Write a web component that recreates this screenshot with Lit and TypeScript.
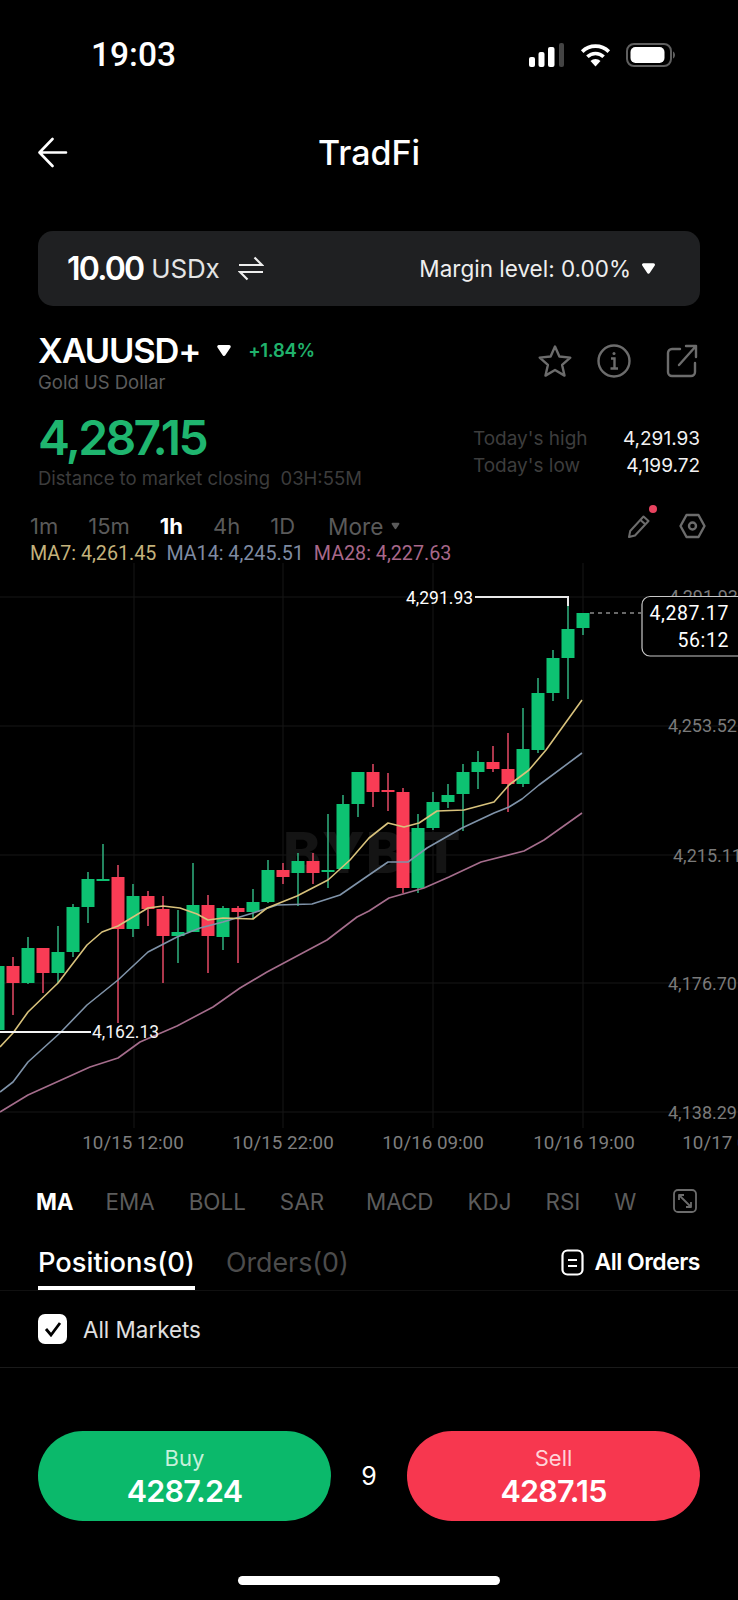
import {LitElement, css, html, svg} from 'lit';
import {customElement} from 'lit/decorators.js';

// chart coordinates are page pixels, the svg viewBox starts at y=563
type Candle = [number, number, number, number, number, 'g' | 'r'];

const CANDLES: Candle[] = [
  [-2, 966, 1030, 960, 1030, 'g'],
  [13, 966, 983, 957, 1015, 'r'],
  [28, 948, 983, 937, 984, 'g'],
  [43, 948, 973, 948, 993, 'r'],
  [58, 952, 973, 926, 983, 'g'],
  [73, 907, 952, 904, 957, 'g'],
  [88, 879, 907, 872, 923, 'g'],
  [103, 879, 881, 844, 881, 'g'],
  [118, 877, 929, 865, 1023, 'r'],
  [133, 896, 929, 884, 937, 'g'],
  [148, 896, 909, 891, 926, 'r'],
  [163, 909, 936, 896, 983, 'r'],
  [178, 932, 936, 910, 963, 'g'],
  [193, 905, 932, 863, 932, 'g'],
  [208, 905, 936, 895, 973, 'r'],
  [223, 908, 937, 906, 950, 'g'],
  [238, 908, 912, 906, 963, 'r'],
  [253, 902, 912, 889, 919, 'g'],
  [268, 870, 902, 860, 903, 'g'],
  [283, 870, 877, 863, 884, 'r'],
  [298, 861, 873, 853, 906, 'g'],
  [313, 861, 873, 853, 884, 'r'],
  [328, 870, 872, 814, 888, 'g'],
  [343, 804, 869, 795, 869, 'g'],
  [358, 772, 804, 772, 817, 'g'],
  [373, 772, 792, 764, 807, 'r'],
  [388, 790, 792, 773, 811, 'r'],
  [403, 792, 888, 788, 893, 'r'],
  [418, 828, 888, 814, 893, 'g'],
  [433, 802, 828, 792, 830, 'g'],
  [448, 795, 802, 784, 808, 'g'],
  [463, 772, 794, 764, 831, 'g'],
  [478, 762, 772, 751, 789, 'g'],
  [493, 762, 769, 746, 772, 'r'],
  [508, 769, 784, 733, 812, 'r'],
  [523, 749, 784, 708, 787, 'g'],
  [538, 693, 750, 678, 753, 'g'],
  [553, 658, 693, 650, 701, 'g'],
  [568, 629, 658, 597, 699, 'g'],
  [583, 613, 628, 613, 635, 'g'],
];

const MA7 = '0,1047 13,1033 28,1012 58,983 87,945 102,932 118,926 133,917 148,908 163,906 180,908 197,914 208,920 223,918 253,919 267,908 297,896 328,880 350,860 369,838 388,823 404,827 419,823 437,811 464,810 494,802 509,785 529,770 546,750 582,700';
const MA14 = '0,1092 13,1082 28,1062 60,1033 87,1005 118,980 148,952 177,937 200,928 223,922 253,913 277,905 312,904 340,895 369,875 388,862 408,862 427,848 462,828 494,813 509,807 522,799 539,785 582,753';
const MA28 = '0,1112 28,1095 90,1067 118,1058 140,1042 177,1026 213,1007 240,988 267,972 327,940 357,917 369,911 389,898 424,888 449,877 481,862 524,851 544,840 582,813';

const H_GRID = [597, 726, 855, 983, 1112];
const V_GRID = [134, 283, 433, 583];

const AXIS: [string, number, number][] = [
  ['4,291.93', 738, 597],
  ['4,253.52', 737, 726],
  ['4,215.11', 742, 856],
  ['4,176.70', 737, 984],
  ['4,138.29', 737, 1113],
];

const TIMES: [string, number][] = [
  ['10/15 12:00', 133],
  ['10/15 22:00', 283],
  ['10/16 09:00', 433],
  ['10/16 19:00', 584],
  ['10/17 05:00', 733],
];

const caret = (w: number, h: number, fill: string) => html`
  <svg width=${w} height=${h} viewBox="0 0 12 10">
    <path d="M2 2h8L6 8z" fill=${fill} stroke=${fill} stroke-width="2.4" stroke-linejoin="round"/>
  </svg>`;

@customElement('app-root')
export class AppRoot extends LitElement {
  static styles = css`
    :host {
      display: block;
      width: 738px;
      height: 1600px;
      overflow: hidden;
      background: #000;
      color: #fff;
      font-family: Inter, "Liberation Sans", sans-serif;
    }

    svg {
      display: block;
      flex: none;
    }

    .status {
      height: 110px;
      padding: 41px 63px 0 91px;
      box-sizing: border-box;
      display: flex;
      justify-content: space-between;
      align-items: flex-start;
    }

    .clock {
      font-family: Roboto, sans-serif;
      font-size: 33.5px;
      line-height: 28px;
      font-weight: 500;
    }

    .status-icons {
      display: flex;
      gap: 15px;
      padding-top: 2px;
    }

    .nav {
      height: 84px;
      padding: 27px 38px 0;
      position: relative;
      box-sizing: border-box;
    }

    .nav-title {
      position: absolute;
      left: 0;
      right: 0;
      top: 25px;
      text-align: center;
      font-size: 34px;
      line-height: 36px;
      font-weight: 500;
    }

    .nav-wrap {
      height: 121px;
    }

    .balance {
      margin: 0 38px;
      height: 75px;
      border-radius: 15px;
      background: #1f2022;
      display: flex;
      align-items: center;
      padding: 0 44px 0 29px;
    }

    .balance b {
      font-size: 32px;
      font-weight: 600;
      letter-spacing: -1.8px;
    }

    .balance .unit {
      font-size: 26px;
      margin-left: 8px;
      color: #e4e4e4;
      letter-spacing: -0.2px;
    }

    .balance .swap {
      margin-left: 19px;
    }

    .margin {
      margin-left: auto;
      display: flex;
      align-items: center;
      gap: 10px;
      font-size: 22.5px;
      color: #eee;
    }

    .symbol {
      height: 88px;
      padding: 24px 40px 0 38px;
      display: flex;
      justify-content: space-between;
      box-sizing: border-box;
    }

    .symbol-name {
      display: flex;
      align-items: center;
      height: 40px;
    }

    .symbol-name strong {
      font-size: 34.5px;
      font-weight: 600;
      letter-spacing: -1.2px;
    }

    .symbol-name .chg {
      margin-left: 16px;
      font-size: 18.5px;
      font-weight: 600;
      color: #20b26c;
      letter-spacing: -0.3px;
    }

    .symbol-name svg {
      margin-left: 16px;
    }

    .symbol-sub {
      margin-top: 1px;
      font-size: 18.5px;
      line-height: 22px;
      color: #5c5c5c;
    }

    .symbol-tools {
      display: flex;
      gap: 25px;
      padding-top: 14px;
      height: 36px;
    }

    .symbol-tools .share {
      margin-left: 10px;
    }

    .quote {
      height: 115px;
      padding: 18px 38px 0;
      display: flex;
      justify-content: space-between;
      box-sizing: border-box;
    }

    .price {
      font-size: 48px;
      line-height: 52px;
      font-weight: 600;
      color: #1fb56f;
      letter-spacing: -2.7px;
    }

    .distance {
      margin-top: 3px;
      font-size: 18.5px;
      line-height: 22px;
      color: #3c3c3c;
    }

    .range {
      display: grid;
      grid-template-columns: 150px auto;
      row-gap: 4px;
      padding-top: 15px;
      font-size: 19px;
      line-height: 23px;
      align-content: start;
    }

    .range span {
      color: #3d3d3d;
    }

    .range b {
      font-weight: 400;
      text-align: right;
      color: #f2f2f2;
    }

    .periods {
      height: 34px;
      padding: 0 32px 0 30px;
      display: flex;
      align-items: center;
      font-size: 22px;
      color: #5a5a5a;
    }

    .periods span {
      margin-right: 30px;
    }

    .periods .on {
      color: #fff;
      font-weight: 700;
    }

    .periods .more {
      display: flex;
      align-items: center;
      gap: 8px;
      margin: 0 0 0 3px;
      font-size: 22.6px;
    }

    .period-tools {
      margin-left: auto;
      display: flex;
      gap: 28px;
      align-items: center;
      position: relative;
    }

    .period-dot {
      position: absolute;
      left: 22px;
      top: -8px;
      width: 8px;
      height: 8px;
      border-radius: 50%;
      background: #e8435f;
    }

    .ma-row {
      height: 20px;
      padding-left: 30px;
      display: flex;
      gap: 10px;
      align-items: center;
      font-family: Roboto, sans-serif;
      font-size: 19.7px;
    }

    .ma7 { color: #c4b27c; }
    .ma14 { color: #7f8ba2; }
    .ma28 { color: #a8688a; }

    .chart {
      height: 597px;
    }

    .indicators {
      height: 76px;
      padding: 6px 41px 0 36px;
      display: flex;
      align-items: center;
      font-size: 22.4px;
      color: #5c5c5c;
      box-sizing: border-box;
    }

    .indicators span {
      margin-right: 34px;
    }

    .indicators .on {
      color: #fff;
      font-weight: 700;
      margin-right: 32px;
    }

    .indicators i {
      width: 1px;
      height: 34px;
      background: #1e1e1e;
      margin: 0 21px 0 -13px;
    }

    .indicators i.last {
      margin: 0 26px 0 -23px;
    }

    .tabs {
      height: 56px;
      margin-top: -1px;
      padding: 0 38px;
      display: flex;
      align-items: flex-start;
      font-size: 26.8px;
      box-sizing: border-box;
      border-bottom: 1px solid #101010;
    }

    .tab-on {
      height: 55px;
      box-sizing: border-box;
      padding-top: 11px;
      font-size: 27.3px;
      font-weight: 500;
      border-bottom: 4px solid #fff;
    }

    .tab {
      margin-left: 31px;
      padding-top: 11px;
      color: #4c4c4c;
    }

    .all-orders {
      margin-left: auto;
      padding-top: 13px;
      display: flex;
      gap: 10px;
      align-items: center;
      font-size: 23px;
      font-weight: 600;
      letter-spacing: -0.5px;
    }

    .filter {
      height: 77px;
      padding: 0 38px;
      display: flex;
      align-items: center;
      gap: 16px;
      font-size: 22.4px;
      color: #e0e0e0;
      border-bottom: 1px solid #1a1a1a;
      box-sizing: border-box;
    }

    .check {
      width: 29px;
      height: 30px;
      border-radius: 7px;
      background: #fff;
      display: flex;
      align-items: center;
      justify-content: center;
    }

    .trade {
      margin-top: 63px;
      padding: 0 38px;
      display: grid;
      grid-template-columns: 293px 1fr 293px;
      align-items: center;
    }

    .btn {
      height: 90px;
      border-radius: 45px;
      display: flex;
      flex-direction: column;
      align-items: center;
      justify-content: center;
      gap: 3px;
    }

    .btn small {
      font-size: 22px;
      line-height: 26px;
    }

    .btn b {
      font-size: 30.5px;
      line-height: 34px;
      font-weight: 600;
      letter-spacing: -0.8px;
    }

    .buy {
      background: #0bb96b;
    }

    .buy small {
      color: #c6f0da;
    }

    .sell {
      background: #f7374f;
    }

    .sell small {
      color: #ffd3d9;
    }

    .spread {
      text-align: center;
      font-size: 25px;
    }

    .home {
      width: 262px;
      height: 9px;
      margin: 55px auto 0;
      border-radius: 5px;
      background: #fff;
    }
  `;

  renderChart() {
    return html`
      <svg class="chart" width="738" height="597" viewBox="0 563 738 597" font-family="Roboto, sans-serif">
        ${H_GRID.map(y => svg`<line x1="0" x2="738" y1=${y} y2=${y} stroke="#161616"/>`)}
        ${V_GRID.map(x => svg`<line x1=${x} x2=${x} y1="563" y2="1128" stroke="#161616"/>`)}
        <text x="283" y="873" font-family="Inter, sans-serif" font-size="57" font-weight="800" fill="#141414" letter-spacing="1">BYBIT</text>
        ${CANDLES.map(([x, top, bot, wt, wb, c]) => {
          const col = c === 'g' ? '#0dc272' : '#f93c55';
          const wick = c === 'g' ? '#2da878' : '#d8455f';
          return svg`
            <line x1=${x} x2=${x} y1=${wt} y2=${wb} stroke=${wick} stroke-width="1.6"/>
            <rect x=${x - 6.5} y=${top} width="13" height=${bot - top} fill=${col}/>`;
        })}
        <polyline points=${MA28} fill="none" stroke="#a56d8c" stroke-width="1.6" stroke-linejoin="round"/>
        <polyline points=${MA14} fill="none" stroke="#7f93a9" stroke-width="1.6" stroke-linejoin="round"/>
        <polyline points=${MA7} fill="none" stroke="#d8c27c" stroke-width="1.6" stroke-linejoin="round"/>

        ${AXIS.map(([t, x, y]) => svg`<text x=${x} y=${y + 6} text-anchor="end" font-size="18" fill="#7a7a7a">${t}</text>`)}
        ${TIMES.map(([t, x]) => svg`<text x=${x} y="1149" text-anchor="middle" font-size="18.8" fill="#7e7e7e">${t}</text>`)}

        <polyline points="475,597 568,597 568,606" fill="none" stroke="#e8e8e8" stroke-width="2"/>
        <text x="406" y="604" font-size="17.5" fill="#fff">4,291.93</text>
        <line x1="0" x2="91" y1="1032" y2="1032" stroke="#f4f4f4" stroke-width="2"/>
        <text x="92" y="1038" font-size="17.5" fill="#f4f4f4">4,162.13</text>

        <line x1="590" x2="641" y1="613" y2="613" stroke="#8a8a8a" stroke-dasharray="4 4" stroke-width="1.4"/>
        <path d="M745 596.5H650a8 8 0 0 0-8 8V648a8 8 0 0 0 8 8H745" fill="#000" stroke="#c8c8c8" stroke-width="1.2"/>
        <text x="729" y="620" text-anchor="end" font-size="19.5" fill="#fff" letter-spacing=".6">4,287.17</text>
        <text x="729" y="647" text-anchor="end" font-size="19.5" fill="#fff" letter-spacing=".6">56:12</text>
      </svg>`;
  }

  render() {
    return html`
      <div class="status">
        <div class="clock">19:03</div>
        <div class="status-icons">
          <svg width="36" height="24" viewBox="0 0 36 24">
            <rect x="0" y="14" width="6" height="10" rx="2" fill="#fff"/>
            <rect x="9.5" y="9" width="6" height="15" rx="2" fill="#fff"/>
            <rect x="19" y="4" width="6.5" height="20" rx="2" fill="#fff"/>
            <rect x="30" y="0" width="5" height="24" rx="2" fill="#444"/>
          </svg>
          <svg width="31" height="24" viewBox="0 0 31 24" fill="none" stroke="#fff" stroke-width="3.6">
            <path d="M2.2 8.6a19 19 0 0 1 26.6 0"/>
            <path d="M7.4 13.8a11.6 11.6 0 0 1 16.2 0"/>
            <path d="M15.5 23.5l-5-5.4a7 7 0 0 1 10 0z" fill="#fff" stroke="none"/>
          </svg>
          <svg width="49" height="24" viewBox="0 0 49 24">
            <rect x="1" y="1" width="44" height="22" rx="7" fill="none" stroke="#5f5f5f" stroke-width="2"/>
            <rect x="4.5" y="4" width="34" height="16" rx="5" fill="#fff"/>
            <path d="M47 8.5c1.4.6 2 2 2 3.5s-.6 2.900-2 3.500z" fill="#5f5f5f"/>
          </svg>
        </div>
      </div>

      <div class="nav-wrap">
        <div class="nav">
          <svg width="30" height="31" viewBox="0 0 30 31" fill="none" stroke="#fff" stroke-width="2.6" stroke-linecap="round" stroke-linejoin="round">
            <path d="M28 15.500H2M14.500 2 1.500 15.500 14.500 29"/>
          </svg>
          <div class="nav-title">TradFi</div>
        </div>
      </div>

      <div class="balance">
        <b>10.00</b>
        <span class="unit">USDx</span>
        <svg class="swap" width="26" height="25" viewBox="0 0 26 25" fill="none" stroke="#eee" stroke-width="2.2">
          <path d="M1 9h23L16.500 1.500M25 16H2l7.500 7.500"/>
        </svg>
        <div class="margin">Margin level: 0.00% ${caret(15, 13, '#fff')}</div>
      </div>

      <div class="symbol">
        <div>
          <div class="symbol-name">
            <strong>XAUUSD+</strong>
            ${caret(16, 13, '#fff')}
            <span class="chg">+1.84%</span>
          </div>
          <div class="symbol-sub">Gold US Dollar</div>
        </div>
        <div class="symbol-tools">
          <svg width="34" height="34" viewBox="0 0 34 34" fill="none" stroke="#6c6c6c" stroke-width="2.4" stroke-linejoin="round">
            <path d="M17 2.500l4.400 10 10.900 1.100-8.200 7.300 2.400 10.700L17 26l-9.500 5.600 2.400-10.700-8.200-7.300 10.900-1.100z"/>
          </svg>
          <svg width="34" height="34" viewBox="0 0 34 34" fill="none" stroke="#6c6c6c" stroke-width="2.400">
            <circle cx="17" cy="17" r="15.500"/>
            <path d="M14 14.500h3.500V24M13.500 24.500h7.500"/>
            <circle cx="17" cy="9.500" r="1.500" fill="#6c6c6c" stroke="none"/>
          </svg>
          <svg class="share" width="32" height="34" viewBox="0 0 32 34" fill="none" stroke="#6c6c6c" stroke-width="2.400" stroke-linecap="round" stroke-linejoin="round">
            <path d="M14 5H6a4 4 0 0 0-4 4v19a4 4 0 0 0 4 4h19a4 4 0 0 0 4-4v-9"/>
            <path d="M13 21 30 2M20 2h10v11"/>
          </svg>
        </div>
      </div>

      <div class="quote">
        <div>
          <div class="price">4,287.15</div>
          <div class="distance">Distance to market closing&nbsp; 03H:55M</div>
        </div>
        <div class="range">
          <span>Today's high</span><b>4,291.93</b>
          <span>Today's low</span><b>4,199.72</b>
        </div>
      </div>

      <div class="periods">
        <span>1m</span><span>15m</span><span class="on">1h</span><span>4h</span><span>1D</span>
        <span class="more">More ${caret(9, 8, '#5a5a5a')}</span>
        <div class="period-tools">
          <svg width="24" height="24" viewBox="0 0 24 24" fill="none" stroke="#6c6c6c" stroke-width="2" stroke-linejoin="round">
            <path d="M16.500 2.500l5 4.500L8 21.500 2 23l1.200-6z"/>
            <path d="M13.500 6l5 4.500"/>
          </svg>
          <div class="period-dot"></div>
          <svg width="27" height="26" viewBox="0 0 27 26" fill="none" stroke="#6c6c6c" stroke-width="2.400" stroke-linejoin="round">
            <path d="M7.500 2h12l6 11-6 11h-12l-6-11z"/>
            <circle cx="13.500" cy="13" r="3.500"/>
          </svg>
        </div>
      </div>

      <div class="ma-row">
        <span class="ma7">MA7: 4,261.45</span>
        <span class="ma14">MA14: 4,245.51</span>
        <span class="ma28">MA28: 4,227.63</span>
      </div>

      ${this.renderChart()}

      <div class="indicators">
        <span class="on">MA</span><span>EMA</span><span>BOLL</span><span>SAR</span><i></i>
        <span>MACD</span><span>KDJ</span><span>RSI</span><span>W</span><i class="last"></i>
        <svg width="24" height="24" viewBox="0 0 24 24" fill="none" stroke="#6c6c6c" stroke-width="1.800" stroke-linejoin="round">
          <rect x="1" y="1" width="22" height="22" rx="4"/>
          <path d="M6 6l12 12M6 11V6h5M18 13v5h-5"/>
        </svg>
      </div>

      <div class="tabs">
        <div class="tab-on">Positions(0)</div>
        <div class="tab">Orders(0)</div>
        <div class="all-orders">
          <svg width="23" height="27" viewBox="0 0 23 27" fill="none" stroke="#fff" stroke-width="2.200">
            <rect x="1.500" y="1.500" width="20" height="24" rx="5"/>
            <path d="M7 11h9M7 17h9"/>
          </svg>
          All Orders
        </div>
      </div>

      <div class="filter">
        <div class="check">
          <svg width="18" height="16" viewBox="0 0 18 16" fill="none" stroke="#000" stroke-width="2.800">
            <path d="M2 8l5 6L16 2"/>
          </svg>
        </div>
        All Markets
      </div>

      <div class="trade">
        <div class="btn buy"><small>Buy</small><b>4287.24</b></div>
        <div class="spread">9</div>
        <div class="btn sell"><small>Sell</small><b>4287.15</b></div>
      </div>

      <div class="home"></div>
    `;
  }
}
